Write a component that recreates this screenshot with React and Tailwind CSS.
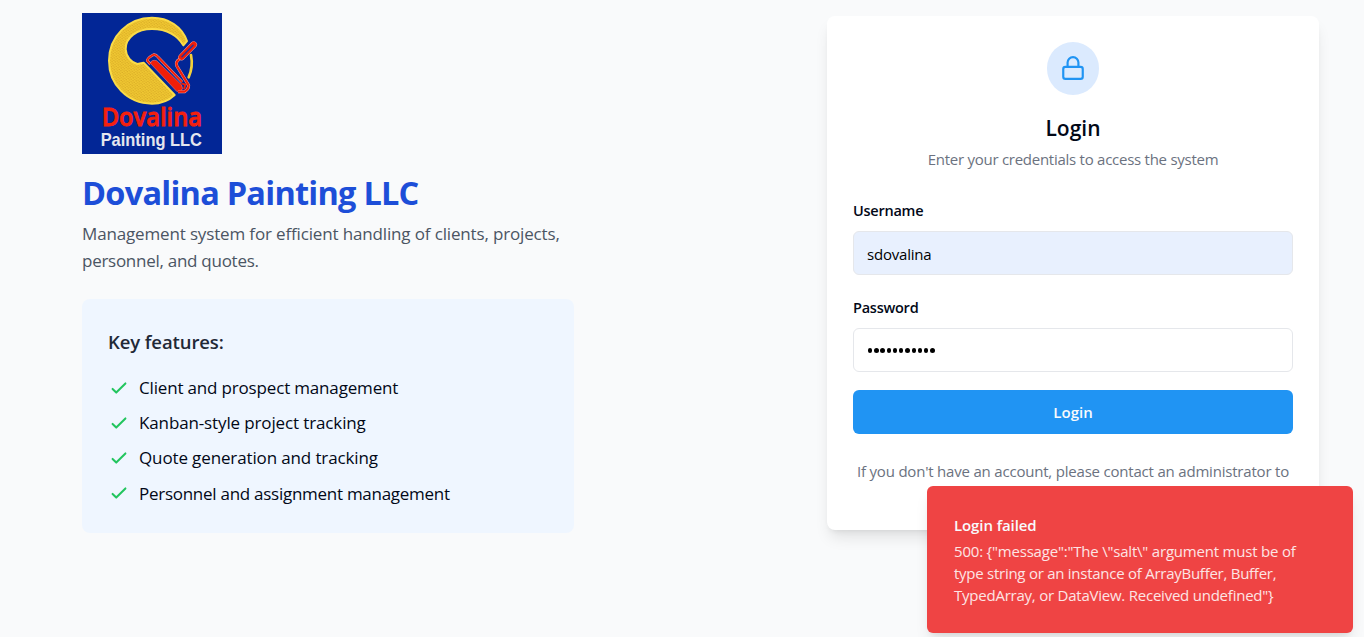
import { Lock } from "lucide-react";

function Logo() {
  return (
    <svg className="block h-[141px] w-[140px]" viewBox="30 27 420 423" preserveAspectRatio="none">
      <defs>
        <pattern id="weave" width="10" height="8" patternUnits="userSpaceOnUse" patternTransform="rotate(8)">
          <rect width="10" height="8" fill="#f0c832" />
          <rect x="1" y="1" width="4" height="2.4" fill="#cf9d20" />
          <rect x="6" y="5" width="4" height="2.4" fill="#d3a324" />
        </pattern>
      </defs>
      <rect x="30" y="27" width="420" height="423" fill="#022696" />
      <path
        d="M334 124 C318 95 285 75 240 75 C196 75 160 100 161 136 C162 158 178 176 196 180 L215 176 L308 273 C290 290 266 299 240 299 C165 299 111 240 111 170 C111 98 168 41 240 41 C290 41 330 68 345 111 Z"
        fill="url(#weave)" stroke="#fadb48" strokeWidth="6" strokeLinejoin="round"
      />
      <path d="M357 153 Q364 188 350 220" fill="none" stroke="#f3d03a" strokeWidth="8" strokeLinecap="round" />
      <path d="M235 178 Q238 166 254 170 L328 242 Q336 254 326 263 L314 262 Z" fill="#f01e08" stroke="#e88f98" strokeWidth="1.5" />
      <path d="M235 180 L226 170 Q225 163 245 152 Q252 151 258 159 L330 234" fill="none" stroke="#f0a0a0" strokeWidth="8" strokeLinejoin="round" />
      <path d="M235 180 L226 170 Q225 163 245 152 Q252 151 258 159 L330 234" fill="none" stroke="#f01e08" strokeWidth="5.5" strokeLinejoin="round" />
      <path d="M318 263 L338 263 Q350 256 350 244 L345 236 L315 187 Q309 174 322 166 L334 153" fill="none" stroke="#f0a0a0" strokeWidth="9" strokeLinejoin="round" />
      <path d="M318 263 L338 263 Q350 256 350 244 L345 236 L315 187 Q309 174 322 166 L334 153" fill="none" stroke="#f01e08" strokeWidth="6.5" strokeLinejoin="round" />
      <path d="M328 238 L340 242 L336 256" fill="none" stroke="#f01e08" strokeWidth="6" />
      <path d="M329 159 L365 122" fill="none" stroke="#f0a0a0" strokeWidth="20" strokeLinecap="round" />
      <path d="M329 159 L365 122" fill="none" stroke="#f01e08" strokeWidth="17.5" strokeLinecap="round" />
      <path d="M330 158 L363 124" fill="none" stroke="#28309c" strokeWidth="4.5" strokeLinecap="round" />
      <text x="89" y="365" textLength="301" lengthAdjust="spacingAndGlyphs" fontSize="77" fontWeight="600" fontFamily="Open Sans, sans-serif" fill="#f4200e" stroke="#f4200e" strokeWidth="2.5">Dovalina</text>
      <text x="86" y="427" textLength="304" lengthAdjust="spacingAndGlyphs" fontSize="55" fontWeight="700" fontFamily="Liberation Sans, sans-serif" fill="#e4e6ee">Painting LLC</text>
    </svg>
  );
}

function CheckMark() {
  return (
    <svg className="mb-px size-[22px] shrink-0 text-[#22c55e]" viewBox="0 0 24 24" fill="none" stroke="currentColor" strokeWidth="2.2" strokeLinecap="round" strokeLinejoin="round">
      <path d="M5 13l4 4L19 7" />
    </svg>
  );
}

const features = [
  { text: "Client and prospect management", cls: "tracking-[-0.17px]" },
  { text: "Kanban-style project tracking", cls: "tracking-[-0.13px]" },
  { text: "Quote generation and tracking", cls: "tracking-[-0.13px]" },
  { text: "Personnel and assignment management", cls: "tracking-[-0.27px]" },
];

export default function App() {
  return (
    <div className="relative flex h-[637px] w-full items-start justify-between overflow-hidden bg-[#f9fafb] pr-[45px] pl-[82px] font-['Open_Sans',sans-serif] text-[17px]">
      <section className="w-[492px] pt-[13px]">
        <Logo />
        <h1 className="mt-[17px] text-[32.5px] leading-[44px] font-bold tracking-[-0.76px] text-[#1d4ed8]">Dovalina Painting LLC</h1>
        <p className="mt-[5px] leading-[27px] whitespace-nowrap text-[#4b5563]">
          <span className="tracking-[-0.15px]">Management system for efficient handling of clients, projects,</span>
          <br />
          <span className="tracking-[-0.27px]">personnel, and quotes.</span>
        </p>
        <div className="mt-[25px] h-[234px] rounded-lg bg-[#eff6ff] px-[26px] pt-[30px]">
          <h2 className="text-[18.5px] leading-[26px] font-semibold tracking-[-0.1px] text-[#1f2937]">Key features:</h2>
          <ul className="mt-[20px] flex flex-col gap-[8.8px] leading-[26.4px] text-[#020817]">
            {features.map((f) => (
              <li key={f.text} className="flex items-center gap-[9px]">
                <CheckMark />
                <span className={f.cls}>{f.text}</span>
              </li>
            ))}
          </ul>
        </div>
      </section>

      <section className="mt-4 flex h-[514px] w-[492px] flex-col rounded-lg bg-white px-[26px] pt-[26px] text-[15px] shadow-[0_10px_15px_-3px_rgba(0,0,0,0.1),0_4px_6px_-4px_rgba(0,0,0,0.1)]">
        <div className="flex h-[53px] w-[52px] items-center justify-center self-center rounded-full bg-[#dbeafe] pb-px">
          <Lock className="size-[26px] text-[#2094f3]" />
        </div>
        <h2 className="mt-[18px] text-center text-[21px] leading-[30px] font-semibold text-[#020817]">Login</h2>
        <p className="mt-[5px] text-center leading-[22px] tracking-[-0.26px] text-[#6b7280]">Enter your credentials to access the system</p>
        <label className="mt-[30px] text-[14.5px] leading-[22px] font-semibold tracking-[-0.25px] text-[#020817]">Username</label>
        <div className="mt-[9px] flex h-[44px] items-center rounded-md border border-[#e5e7eb] bg-[#e8f0fe] px-[13px] pt-[2px] tracking-[-0.2px] text-black">sdovalina</div>
        <label className="mt-[22px] text-[14.5px] leading-[22px] font-semibold tracking-[-0.25px] text-[#020817]">Password</label>
        <div className="mt-[9px] flex h-[44px] items-center gap-[1.95px] rounded-md border border-[#e5e7eb] px-[14px] pt-px text-black">
          {Array.from({ length: 11 }, (_, i) => (
            <i key={i} className="size-[4.3px] rounded-full bg-black" />
          ))}
        </div>
        <button className="mt-[18px] h-[44px] rounded-md bg-[#2094f3] font-semibold text-[#f8fafc]">Login</button>
        <p className="mt-[26px] text-center leading-[22px] tracking-[-0.2px] whitespace-nowrap text-[#6b7280]">If you don't have an account, please contact an administrator to</p>
      </section>

      <div className="absolute top-[486px] left-[927px] h-[147px] w-[426px] rounded-md bg-[#ef4444] px-[27px] pt-[28px] text-[15px] leading-[22px] whitespace-nowrap text-[#fde4e4] shadow-lg">
        <p className="font-semibold tracking-[-0.1px] text-[#f8fafc]">Login failed</p>
        <p className="mt-1">
          <span className="tracking-[-0.2px]">{'500: {"message":"The \\"salt\\" argument must be of'}</span>
          <br />
          <span className="tracking-[-0.26px]">type string or an instance of ArrayBuffer, Buffer,</span>
          <br />
          <span className="tracking-[-0.23px]">{'TypedArray, or DataView. Received undefined"}'}</span>
        </p>
      </div>
    </div>
  );
}
